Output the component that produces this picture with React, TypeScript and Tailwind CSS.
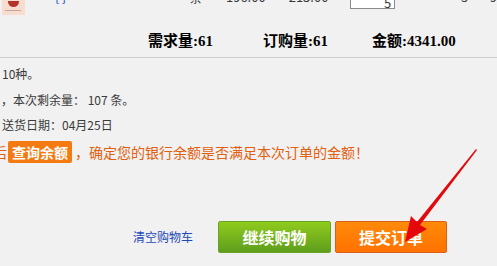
export default function App() {
  return (
    <div className="relative w-[497px] h-[266px] overflow-hidden bg-[#f1f1f1] text-[12px] text-[#3a3a3a]" style={{ fontFamily: '"Noto Sans CJK SC", "Noto Sans", sans-serif' }}>
      {/* clipped product row */}
      <div className="flex items-end h-[30px] -mt-[15px] text-[13px]">
        <div className="w-[2px]" />
        <div className="w-[23px] h-[29px] bg-[#f7dcd0] flex flex-col items-center justify-end pb-[4px] gap-[3px]">
          <div className="w-[11px] h-[6px] bg-[#b5342a] rounded-b-full" />
          <div className="w-[16px] h-[1px] bg-[#caa59a]" />
        </div>
        <div className="w-[30px]" />
        <span className="w-[135px] text-[#2b58c8] leading-[18px] mb-[9px]">{'{ }'}</span>
        <span className="w-[37px] leading-[18px] mb-[9px]">条</span>
        <span className="w-[63px] leading-[18px] mb-[9px]">196.00</span>
        <span className="w-[62px] leading-[18px] mb-[9px]">213.00</span>
        <div className="w-[45px] h-[24px] mb-[6px] border border-[#8a8a8a] bg-white text-right pr-[3px] leading-[34px]">5</div>
        <div className="w-[66px]" />
        <span className="w-[29px] leading-[18px] mb-[9px]">5</span>
        <span className="leading-[18px] mb-[9px]">9</span>
      </div>

      {/* totals */}
      <div className="flex h-[43px] items-center pl-[148px] pt-[10px] text-[15px] font-bold text-black border-b border-[#cfcfcf]" style={{ fontFamily: '"Liberation Serif", "Noto Sans CJK SC", serif' }}>
        <span>需求量:61</span>
        <span className="ml-[50px]">订购量:61</span>
        <span className="ml-[44px]">金额:4341.00</span>
      </div>

      {/* notes */}
      <div className="flex flex-col pt-[3px]">
        <div className="h-[26px] leading-[26px] ml-[2px]">10种。</div>
        <div className="h-[25px] leading-[25px] ml-[1px]">，本次剩余量： 107 条。</div>
        <div className="h-[25px] leading-[25px] ml-[2px]">送货日期：04月25日</div>
        <div className="flex items-center h-[30px] text-[14px] text-[#e2600d] -ml-[7px]">
          <span>后</span>
          <span className="ml-[1px] px-[4px] h-[22px] leading-[22px] bg-[#f57a12] text-white font-bold rounded-[2px]">查询余额</span>
          <span className="ml-[3px]">，确定您的银行余额是否满足本次订单的金额！</span>
        </div>
      </div>

      {/* actions */}
      <div className="flex items-center mt-[54px]">
        <a className="ml-[133px] text-[#1d49b8] text-[12px]">清空购物车</a>
        <button className="ml-[25px] w-[113px] h-[32px] rounded-[2px] border border-[#6aa222] bg-gradient-to-b from-[#8fcb1c] to-[#5f9e1d] text-white text-[16px] font-bold">继续购物</button>
        <button className="ml-[4px] w-[112px] h-[32px] rounded-[2px] border border-[#d9601a] bg-gradient-to-b from-[#ff8a0a] to-[#ff7200] text-white text-[16px] font-bold">提交订单</button>
      </div>

      {/* red arrow */}
      <svg className="absolute left-0 top-0" width="497" height="266" viewBox="0 0 497 266">
        <polygon points="476,149 417,222 411,216 405,242 427,229 420,225 477,150" fill="#e4080c" />
      </svg>
    </div>
  );
}
